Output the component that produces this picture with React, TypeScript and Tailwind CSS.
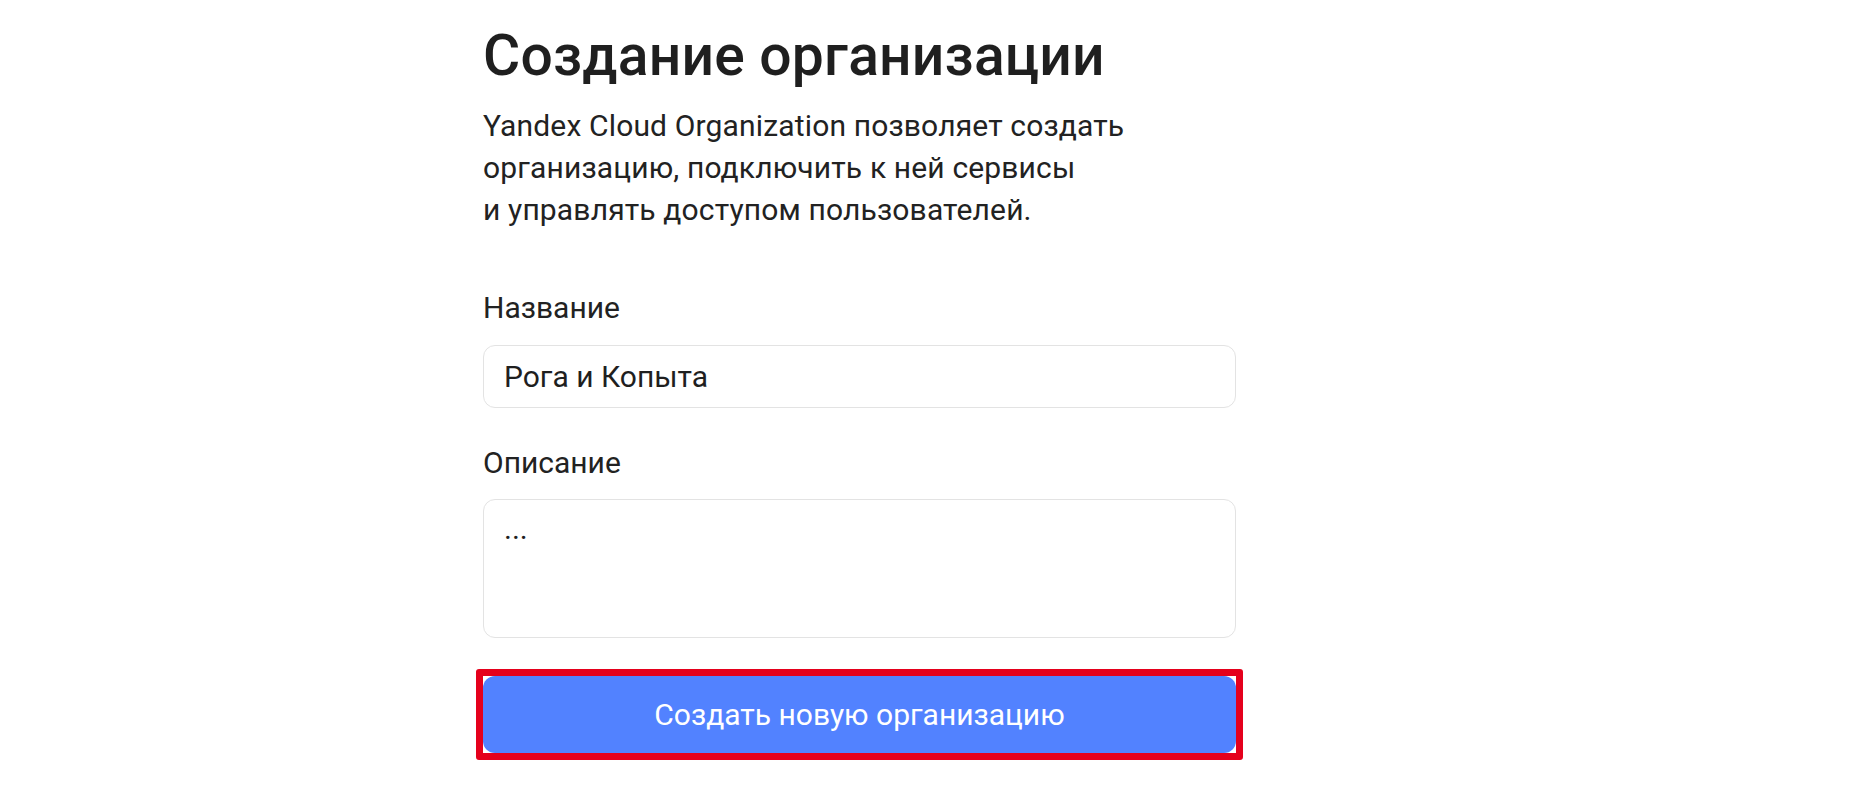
export default function App() {
  return (
    <div className="min-h-screen bg-white font-['Roboto',sans-serif] text-[#222]">
      <div className="ml-[483px] w-[753px] pt-[24px]">
        <h1 className="text-[57px] font-medium leading-[64px] tracking-[0.2px] text-[#1f1f1f]">
          Создание организации
        </h1>
        <p className="mt-[17px] text-[30px] leading-[42px] tracking-[0.15px]">
          Yandex Cloud Organization позволяет создать
          <br />
          организацию, подключить к ней сервисы
          <br />
          и управлять доступом пользователей.
        </p>

        <label className="mt-[56px] block text-[30px] leading-[42px]">Название</label>
        <input
          className="mt-[16px] block h-[63px] w-full rounded-[12px] border border-[#e3e3e3] px-[20px] text-[30px] text-[#1f1f1f] outline-none"
          defaultValue="Рога и Копыта"
        />

        <label className="mt-[34px] block text-[30px] leading-[42px]">Описание</label>
        <textarea
          className="mt-[15px] block h-[139px] w-full resize-none rounded-[12px] border border-[#e3e3e3] px-[20px] pt-[8px] text-[30px] leading-[42px] text-[#1f1f1f] outline-none"
          defaultValue="..."
        />

        <div className="-ml-[7px] mt-[31px] w-[767px] rounded-[3px] border-[7px] border-[#e5001c] bg-white">
          <button className="block h-[77px] w-full rounded-[12px] bg-[#5282ff] text-[30px] text-white">
            Создать новую организацию
          </button>
        </div>
      </div>
    </div>
  );
}
